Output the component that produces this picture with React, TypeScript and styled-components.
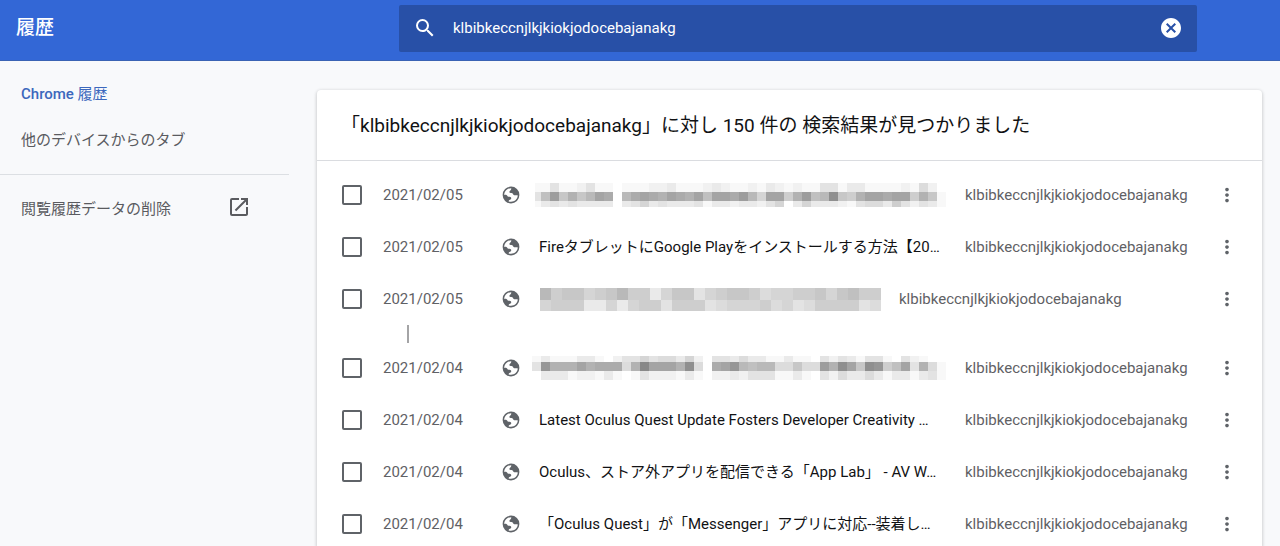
import React from "react";
import styled, { createGlobalStyle } from "styled-components";
import { MdSearch, MdCancel, MdMoreVert, MdOpenInNew } from "react-icons/md";

const Global = createGlobalStyle`
  * { box-sizing: border-box; }
  body {
    margin: 0;
    background: #f8f9fb;
    color: #111214;
    font-family: Roboto, "Noto Sans CJK JP", sans-serif;
    font-size: 15px;
  }
  button, input { font: inherit; color: inherit; }
`;

const Page = styled.div`
  height: 100vh;
  display: flex;
  flex-direction: column;
  overflow: hidden;
`;

const Toolbar = styled.header`
  flex: none;
  display: grid;
  grid-template-columns: 399px minmax(0, 1fr) 83px;
  align-items: center;
  height: 61px;
  padding-bottom: 4px;
  background: #3367d6;
  border-bottom: 1px solid #3a63b4;
`;

const Title = styled.h1`
  margin: 0;
  padding-left: 16px;
  color: #fff;
  font-size: 19px;
  line-height: 28px;
  font-weight: 500;
`;

const SearchBox = styled.form`
  display: flex;
  align-items: center;
  height: 47px;
  padding: 0 14px;
  border-radius: 2px;
  background: #2850a7;
  color: #fff;
`;

const SearchInput = styled.input`
  flex: 1;
  min-width: 0;
  margin-left: 16px;
  padding: 0;
  border: 0;
  outline: 0;
  background: transparent;
`;

const IconButton = styled.button`
  display: flex;
  flex: none;
  padding: 0;
  border: 0;
  background: none;
  cursor: pointer;
`;

const Body = styled.div`
  flex: 1;
  min-height: 0;
  display: flex;
`;

const Sidebar = styled.nav`
  flex: none;
  width: 289px;
  padding-top: 8px;
`;

const NavLink = styled.a<{ $active?: boolean }>`
  display: flex;
  align-items: center;
  justify-content: space-between;
  height: 46px;
  padding: 0 38px 0 21px;
  color: ${(p) => (p.$active ? "#3c68bd" : "#5a5b5f")};
  text-decoration: none;
`;

const Brand = styled.span`
  font-weight: 500;
`;

const Divider = styled.hr`
  height: 1px;
  margin: 13px 0 9px;
  border: 0;
  background: #dcdfe3;
`;

const Card = styled.main`
  flex: 1;
  min-width: 0;
  margin: 29px 18px 0 28px;
  border-radius: 4px 4px 0 0;
  background: #fff;
  box-shadow: 0 1px 3px 1px rgba(60, 64, 67, 0.2);
`;

const CardTitle = styled.h2`
  height: 71px;
  margin: 0;
  padding: 0 24px;
  border-bottom: 1px solid #dadce0;
  font-size: 19px;
  line-height: 72px;
  font-weight: 400;
  white-space: nowrap;
`;

const List = styled.ul`
  margin: 0;
  padding: 8px 0 0;
  list-style: none;
`;

const Row = styled.li`
  display: flex;
  align-items: center;
  height: 52px;
  padding: 0 24px 0 25px;
`;

const Check = styled.input`
  appearance: none;
  flex: none;
  width: 20px;
  height: 20px;
  margin: 0;
  border: 2px solid #5f6368;
  border-radius: 2px;
`;

const DateText = styled.time`
  flex: none;
  width: 119px;
  margin-left: 21px;
  color: #5f6165;
`;

const Entry = styled.div`
  flex: 1;
  min-width: 0;
  display: flex;
  align-items: center;
  margin-left: 19px;
  gap: 18px;
`;

const EntryLink = styled.a<{ $fill: boolean }>`
  flex: ${(p) => (p.$fill ? "1 1 0" : "none")};
  min-width: 0;
  white-space: nowrap;
  color: #111214;
  line-height: 24px;
  text-decoration: none;
`;

const Domain = styled.span`
  flex: none;
  width: 228px;
  color: #5f6165;
`;

const MenuSlot = styled.div`
  flex: none;
  margin-left: 23px;
  color: #5f6368;
`;

const Gap = styled.li`
  height: 17px;
  padding-left: 90px;
  &::before {
    content: "";
    display: block;
    width: 2px;
    height: 18px;
    background: #a4a4a6;
  }
`;

const MosaicSvg = styled.svg<{ $bleed: boolean }>`
  display: block;
  margin-left: ${(p) => (p.$bleed ? "-7px" : "1px")};
`;

const GlobeSvg = styled.svg`
  flex: none;
  display: block;
`;

const Globe = () => (
  <GlobeSvg width="18" height="18" viewBox="0 0 18 18" aria-hidden="true">
    <circle cx="9" cy="9" r="8.4" fill="#5f6368" />
    <path
      d="M9.2 2.2C9.6 4 8.200 4.400 7.500 5.400C6.900 6.500 8 7 9.400 7C11.200 7.100 10.900 8.800 12.200 9.200C13.400 9.500 14.800 8.900 15.800 9.600C15.500 13 12.800 15.800 9 15.800C8 15.800 7.300 15.600 6.700 15.400C6.300 13.900 9.400 13.800 9.300 12.200C9.200 10.900 8 10.900 6.600 10.800C5.100 10.600 5.500 8.900 4 8.700C3.300 8.600 2.700 8.700 2.200 8.900C2.300 5.200 5.200 2.200 9.200 2.200Z"
      fill="#fff"
    />
  </GlobeSvg>
);

type Grid = { cell: number; heights: number[]; rows: string[]; bleed: boolean; inset?: number };

// Each character is a darkness level in base 36; 0 is white.
const shade = (c: string) => {
  const v = 255 - parseInt(c, 36) * 7;
  return `rgb(${v},${v},${v})`;
};

const Mosaic = ({ cell, heights, rows, bleed, inset = 0 }: Grid) => {
  const width = rows[0].length * cell;
  const height = heights.reduce((a, b) => a + b, 0);
  return (
    <MosaicSvg
      $bleed={bleed}
      width={width}
      height={height}
      viewBox={`0 0 ${width} ${height}`}
      shapeRendering="crispEdges"
      aria-hidden="true"
    >
      {rows.map((row, r) =>
        [...row].map((c, i) => (
          <rect
            key={`${r}-${i}`}
            x={i === 0 ? inset : i * cell}
            y={heights.slice(0, r).reduce((a, b) => a + b, 0)}
            width={i === 0 ? cell - inset : cell}
            height={heights[r]}
            fill={shade(c)}
          />
        ))
      )}
    </MosaicSvg>
  );
};

const mosaicA: Grid = {
  cell: 9,
  heights: [9, 9, 6],
  bleed: true,
  inset: 3,
  rows: [
    "1141124110111223111232112132121144133111121520",
    "49E8B8ADC0ACDCBDCBD9DDCEA6DD7BE9AG87BDDCDD7B81",
    "1343433330346343334133233246036333214553742431",
  ],
};

const mosaicB: Grid = {
  cell: 11,
  heights: [12, 11],
  bleed: false,
  rows: ["A788678 A773688467887566778689778".replace(" ", ""), "6777336367747774566675645777745566"].map((r) => r.slice(0, 31)),
};

const mosaicC: Grid = {
  cell: 9,
  heights: [6, 9, 9],
  bleed: true,
  rows: [
    "1311133102446455362044353311311042431441042100",
    "4FBBBDBCCC5BHDDDBG50CDFA9AA55855EBGD8GF79D4B51",
    "0333122131014222131022324441131042533531331341",
  ],
};

type Item = { date: string; title?: string; mosaic?: Grid; gapAfter?: boolean };

const items: Item[] = [
  { date: "2021/02/05", mosaic: mosaicA },
  { date: "2021/02/05", title: "FireタブレットにGoogle Playをインストールする方法【20…" },
  { date: "2021/02/05", mosaic: mosaicB, gapAfter: true },
  { date: "2021/02/04", mosaic: mosaicC },
  { date: "2021/02/04", title: "Latest Oculus Quest Update Fosters Developer Creativity …" },
  { date: "2021/02/04", title: "Oculus、ストア外アプリを配信できる「App Lab」 - AV W…" },
  { date: "2021/02/04", title: "「Oculus Quest」が「Messenger」アプリに対応--装着し…" },
];

const query = "klbibkeccnjlkjkiokjodocebajanakg";

export default function App() {
  return (
    <Page>
      <Global />
      <Toolbar>
        <Title>履歴</Title>
        <SearchBox role="search">
          <MdSearch size={24} />
          <SearchInput type="text" aria-label="履歴を検索" defaultValue={query} />
          <IconButton type="button" aria-label="検索をクリア">
            <MdCancel size={24} />
          </IconButton>
        </SearchBox>
      </Toolbar>
      <Body>
        <Sidebar>
          <NavLink href="#history" $active>
            <span>
              <Brand>Chrome</Brand> 履歴
            </span>
          </NavLink>
          <NavLink href="#tabs">他のデバイスからのタブ</NavLink>
          <Divider />
          <NavLink href="#clear">
            閲覧履歴データの削除
            <MdOpenInNew size={24} />
          </NavLink>
        </Sidebar>
        <Card>
          <CardTitle>「{query}」に対し 150 件の 検索結果が見つかりました</CardTitle>
          <List>
            {items.map((item, i) => (
              <React.Fragment key={i}>
                <Row>
                  <Check type="checkbox" aria-label={item.title ?? item.date} />
                  <DateText>{item.date}</DateText>
                  <Globe />
                  <Entry>
                    <EntryLink href="#entry" $fill={!item.gapAfter}>
                      {item.mosaic ? <Mosaic {...item.mosaic} /> : item.title}
                    </EntryLink>
                    <Domain>{query}</Domain>
                  </Entry>
                  <MenuSlot>
                    <IconButton type="button" aria-label="操作">
                      <MdMoreVert size={22} />
                    </IconButton>
                  </MenuSlot>
                </Row>
                {item.gapAfter && <Gap />}
              </React.Fragment>
            ))}
          </List>
        </Card>
      </Body>
    </Page>
  );
}
